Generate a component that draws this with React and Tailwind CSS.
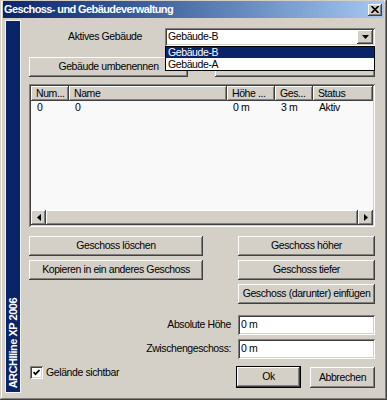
const raised =
  "shadow-[inset_-1px_-1px_#404040,inset_1px_1px_#ffffff,inset_-2px_-2px_#808080,inset_2px_2px_#d4d0c8]";
const sunken =
  "shadow-[inset_1px_1px_#808080,inset_-1px_-1px_#ffffff,inset_2px_2px_#404040,inset_-2px_-2px_#d4d0c8]";

function Btn({ className, children }) {
  return (
    <div
      className={`flex items-center justify-center whitespace-nowrap bg-[#d4d0c8] ${raised} ${className}`}
    >
      {children}
    </div>
  );
}

function Arrow({ dir }) {
  if (dir === "down")
    return (
      <svg width="7" height="4" viewBox="0 0 7 4">
        <polygon points="0,0 7,0 3.5,4" fill="#000" />
      </svg>
    );
  if (dir === "left")
    return (
      <svg width="4" height="7" viewBox="0 0 4 7">
        <polygon points="4,0 4,7 0,3.5" fill="#000" />
      </svg>
    );
  return (
    <svg width="4" height="7" viewBox="0 0 4 7">
      <polygon points="0,0 0,7 4,3.5" fill="#000" />
    </svg>
  );
}

function Header({ w, children, grow }) {
  return (
    <div
      className={`h-[15px] flex items-center pl-[5px] overflow-hidden whitespace-nowrap ${raised} ${grow ? "flex-1" : ""}`}
      style={grow ? undefined : { width: w }}
    >
      {children}
    </div>
  );
}

export default function App() {
  const cols = [38, 158, 48, 38];
  const row = ["0", "0", "0 m", "3 m", "Aktiv"];
  return (
    <div className="w-[387px] h-[400px] bg-[#d4d0c8] flex flex-col font-['Liberation_Sans',Arial,sans-serif] text-[10.5px] tracking-[-0.4px] text-black pl-[3px] pr-[3px] pt-[1px] pb-[4px] shadow-[inset_-1px_-1px_#404040,inset_1px_1px_#d4d0c8,inset_-2px_-2px_#808080,inset_2px_2px_#ffffff] overflow-hidden select-none">
      {/* title bar */}
      <div className="h-[17px] flex items-center bg-linear-to-r from-[#0a246a] to-[#a6caf0] pl-[1px] pr-[2px]">
        <span className="text-white font-bold text-[11px] tracking-[-0.6px] leading-none">
          Geschoss- und Gebäudeverwaltung
        </span>
        <div className={`ml-auto w-[14px] h-[12px] flex items-center justify-center bg-[#d4d0c8] ${raised}`}>
          <svg width="8" height="7" viewBox="0 0 8 7">
            <path d="M0.5 0 L7.5 7 M7.5 0 L0.5 7" stroke="#000" strokeWidth="1.6" />
          </svg>
        </div>
      </div>

      <div className="flex-1 flex">
        {/* brand sidebar */}
        <div className="mt-[2px] mb-[3px] ml-[2px] w-[16px] bg-[#0a246a] border border-[#f4f4f4] flex items-end justify-center pb-[4px]">
          <span className="[writing-mode:vertical-rl] rotate-180 text-white font-bold text-[11px] tracking-[-0.5px] leading-none">
            ARCHIline XP 2006
          </span>
        </div>

        {/* main */}
        <div className="ml-[8px] w-[346px] flex flex-col">
          {/* active building */}
          <div className="mt-[10px] h-[18px] flex items-center">
            <div className="w-[113px] text-right">Aktives Gebäude</div>
            <div className={`relative ml-[23px] flex-1 h-[18px] bg-white flex items-center p-[2px] ${sunken}`}>
              <span className="pl-[1px] flex-1">Gebäude-B</span>
              <Btn className="w-[16px] h-[14px]">
                <Arrow dir="down" />
              </Btn>
              {/* open dropdown list */}
              <div className="absolute left-0 top-[18px] w-[210px] h-[25px] bg-white border border-black z-10 flex flex-col">
                <div className="h-[11px] bg-[#0a246a] text-white pl-[2px] flex items-center leading-none">
                  Gebäude-B
                </div>
                <div className="h-[12px] pl-[2px] flex items-center leading-none">Gebäude-A</div>
              </div>
            </div>
          </div>

          {/* rename row */}
          <div className="mt-[11px] h-[20px] flex justify-between">
            <Btn className="w-[159px] h-[20px]">Gebäude umbenennen</Btn>
            <Btn className="w-[160px] h-[20px]"> </Btn>
          </div>

          {/* floor list */}
          <div className={`mt-[7px] h-[143px] bg-[#f9f9f9] p-[2px] flex flex-col ${sunken}`}>
            <div className="flex bg-[#d4d0c8]">
              <Header w={cols[0]}>Num...</Header>
              <Header w={cols[1]}>Name</Header>
              <Header w={cols[2]}>Höhe ...</Header>
              <Header w={cols[3]}>Ges...</Header>
              <Header grow>Status</Header>
            </div>
            <div className="flex h-[14px] items-center">
              {row.map((c, i) => (
                <div
                  key={i}
                  className="pl-[6px] whitespace-nowrap"
                  style={i < 4 ? { width: cols[i] } : undefined}
                >
                  {c}
                </div>
              ))}
            </div>
            <div className="flex-1" />
            <div className="h-[15px] flex bg-[#d4d0c8]">
              <Btn className="w-[15px] h-[15px]">
                <Arrow dir="left" />
              </Btn>
              <Btn className="flex-1 h-[15px]"> </Btn>
              <Btn className="w-[15px] h-[15px]">
                <Arrow dir="right" />
              </Btn>
            </div>
          </div>

          {/* floor actions */}
          <div className="mt-[9px] flex justify-between">
            <div className="w-[174px] flex flex-col gap-[4px]">
              <Btn className="h-[20px]">Geschoss löschen</Btn>
              <Btn className="h-[20px]">Kopieren in ein anderes Geschoss</Btn>
            </div>
            <div className="w-[137px] flex flex-col gap-[4px]">
              <Btn className="h-[20px]">Geschoss höher</Btn>
              <Btn className="h-[20px]">Geschoss tiefer</Btn>
              <Btn className="h-[20px]">Geschoss (darunter) einfügen</Btn>
            </div>
          </div>

          {/* heights */}
          <div className="mt-[11px] flex flex-col gap-[4px]">
            <div className="h-[20px] flex items-center">
              <div className="w-[202px] text-right">Absolute Höhe</div>
              <div className={`ml-[7px] flex-1 h-[20px] bg-white flex items-center pl-[3px] ${sunken}`}>0 m</div>
            </div>
            <div className="h-[20px] flex items-center">
              <div className="w-[202px] text-right">Zwischengeschoss:</div>
              <div className={`ml-[7px] flex-1 h-[20px] bg-white flex items-center pl-[3px] ${sunken}`}>0 m</div>
            </div>
          </div>

          {/* footer */}
          <div className="mt-[7px] h-[22px] flex items-start">
            <div className="mt-[-1px] ml-[1px] flex items-center gap-[3px]">
              <div className={`w-[13px] h-[13px] bg-white flex items-center justify-center ${sunken}`}>
                <svg width="7" height="7" viewBox="0 0 7 7">
                  <polyline points="0.5,3 2.5,5.2 6.5,1" fill="none" stroke="#000" strokeWidth="1.7" />
                </svg>
              </div>
              <span>Gelände sichtbar</span>
            </div>
            <Btn className="ml-auto w-[65px] h-[22px] border border-black">Ok</Btn>
            <Btn className="ml-[9px] w-[65px] h-[21px] mt-[1px]">Abbrechen</Btn>
          </div>
        </div>
      </div>
    </div>
  );
}
